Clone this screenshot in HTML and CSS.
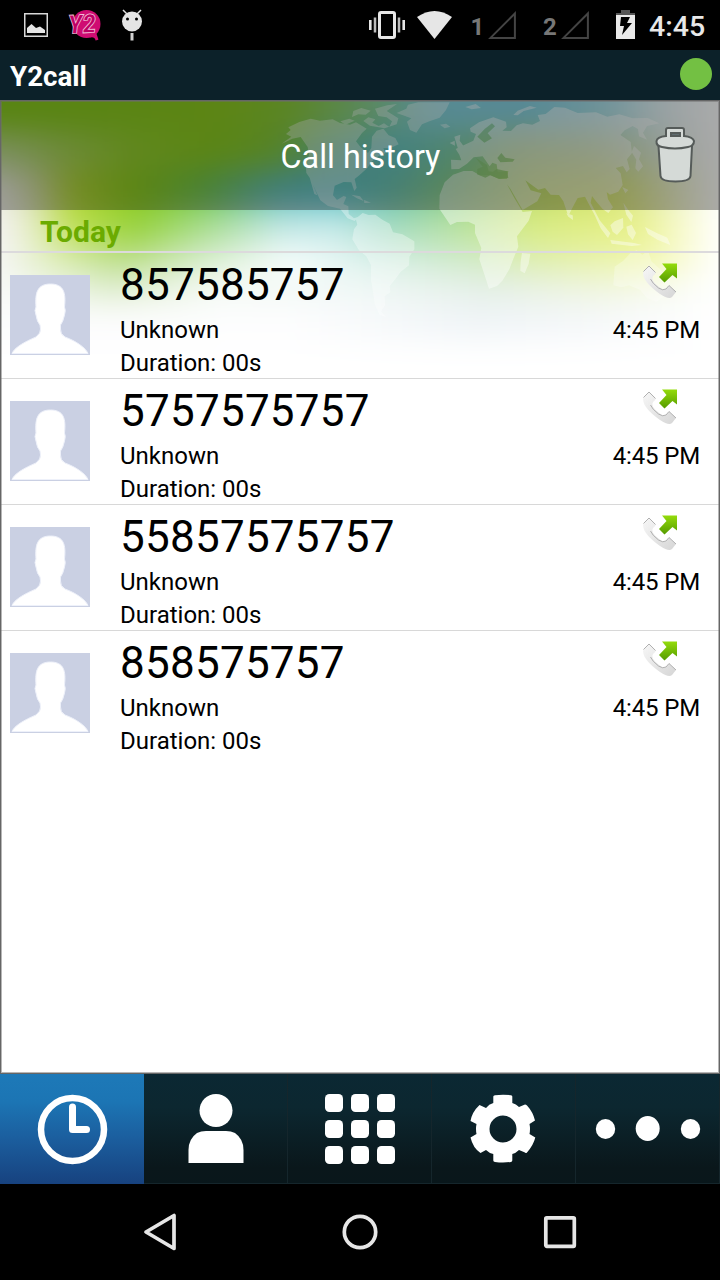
FILE: index.html
```html
<!DOCTYPE html>
<html lang="en">
<head>
<meta charset="utf-8">
<title>Y2call</title>
<link rel="stylesheet" href="styles.css">
</head>
<body>
<svg class="defs" width="0" height="0" aria-hidden="true">
  <defs>
    <linearGradient id="arrow" x1="0" y1="0" x2="0" y2="1"><stop offset="0" stop-color="#94dc0b"/><stop offset="1" stop-color="#559b00"/></linearGradient>
    <linearGradient id="handset" x1="0" y1="0" x2="1" y2="1"><stop offset="0" stop-color="#f7f7f7"/><stop offset="1" stop-color="#d6d6d6"/></linearGradient>
    <symbol id="avatar" viewBox="0 0 80 80">
      <rect width="80" height="80" fill="#cad0e3"/>
      <path d="M2 78.500C4 73 14 67 26 62Q31 58 30.500 54L30 50Q27 47 26 40Q24 35 26 32C25 18 27 9 40.500 9S56 18 54.500 32Q56 35 54.500 40Q53 47 50.500 50V54Q50 59 55 62C66 66 76 73 78 78.500Z" fill="#fff" stroke="#eef1fa"/>
    </symbol>
    <symbol id="outgoing" viewBox="0 0 40 40">
      <path d="M4 9L9 3.500L15.500 10Q16 12 13 14Q10 18 19 25Q23 29 26 27L29 23.500L36 30L32 35Q29 38 20 32Q3 20 3 11Z" fill="url(#handset)"/>
      <path d="M3.500 9.500L9 4L15.500 10.500M10.500 17Q12 21 18.500 26Q23 29 26 27L29 23.500L36 30" fill="none" stroke="#b0b0b0"/>
      <path d="M22 1.500H37V16.500L32.500 13L24.500 20.500L19 15L26.500 7Z" fill="url(#arrow)"/>
    </symbol>
  </defs>
</svg>

<div class="screen">
  <header class="status-bar">
    <div class="notifications">
      <svg width="24" height="24" viewBox="0 0 24 24"><rect x=".75" y=".75" width="22.5" height="22.5" fill="none" stroke="#d8d8d8" stroke-width="1.5"/><path d="M3 20V15L7.500 11L12 15L16 13.500L21 17V20Z" fill="#e6e6e6"/></svg>
      <svg class="app-badge" width="36" height="34" viewBox="0 0 36 34"><circle cx="19.500" cy="16" r="14" fill="#cf0c72"/><path d="M23 28Q29 27 30 32L28 26" fill="#cf0c72" stroke="#cf0c72" stroke-width="3"/><text class="badge-text" x="1" y="25" textLength="28" lengthAdjust="spacingAndGlyphs" transform="rotate(-3 16 16)">Y2</text></svg>
      <svg class="robot" width="22" height="32" viewBox="0 0 22 32"><path d="M2 1L6 5M20 1L16 5" stroke="#e4e4e4" stroke-width="1.500"/><circle cx="11" cy="12.500" r="10" fill="#e4e4e4"/><circle cx="6.500" cy="10" r="1.500"/><circle cx="15.500" cy="10" r="1.500"/><path d="M11 24V31.500" stroke="#d2d2d2" stroke-width="3"/></svg>
    </div>
    <div class="system">
      <svg class="vibrate" width="36" height="28" viewBox="0 0 36 28"><rect x="10.500" y="1.500" width="15" height="25" rx="1.500" fill="none" stroke="#e6e6e6" stroke-width="3"/><path d="M1.300 9V19M34.700 9V19" stroke="#e6e6e6" stroke-width="2.600"/><path d="M6 6.500V21.500M30 6.500V21.500" stroke="#bbb" stroke-width="2.500"/></svg>
      <svg class="wifi" width="35" height="28" viewBox="0 0 36 28" preserveAspectRatio="none"><path d="M0 6Q18-6 36 6L18 28Z" fill="#e6e6e6"/></svg>
      <span class="sim">1</span>
      <svg class="signal" width="28" height="28" viewBox="0 0 28 28"><path d="M2.500 26.900H26.900V2.500Z" fill="none" stroke="#444" stroke-width="2"/></svg>
      <span class="sim sim-two">2</span>
      <svg class="signal" width="28" height="28" viewBox="0 0 28 28"><path d="M2.500 26.900H26.900V2.500Z" fill="none" stroke="#444" stroke-width="2"/></svg>
      <svg class="battery" width="19" height="29" viewBox="0 0 19 29"><path d="M5 0H14V3H19V6H0V3H5Z" fill="#555"/><path d="M0 5H19V29H0Z" fill="#e9e9e9"/><path d="M5 7H14L11 13H16L6 25L8 16H4Z" fill="#000"/></svg>
      <span class="clock">4:45</span>
    </div>
  </header>

  <div class="app-bar"><span>Y2call</span><i class="online"></i></div>

  <main class="content">
    <svg class="backdrop" width="720" height="974" viewBox="0 100 720 974" aria-hidden="true">
      <defs>
        <filter id="soft" filterUnits="userSpaceOnUse" x="-60" y="20" width="840" height="420" color-interpolation-filters="sRGB"><feGaussianBlur stdDeviation="15"/></filter>
        <filter id="edge" x="-5%" y="-5%" width="110%" height="110%"><feGaussianBlur stdDeviation="1.2"/></filter>
        <linearGradient id="r1" gradientUnits="userSpaceOnUse" x1="0" x2="720" y1="0" y2="0"><stop offset="0" stop-color="#84c61c"/><stop offset=".3" stop-color="#89c71f"/><stop offset=".4" stop-color="#88c636"/><stop offset=".5" stop-color="#88cb83"/><stop offset=".6" stop-color="#82cedb"/><stop offset=".74" stop-color="#82cddf"/><stop offset=".84" stop-color="#a6dbe6"/><stop offset=".92" stop-color="#e3f1f4"/><stop offset="1" stop-color="#fff"/></linearGradient>
        <linearGradient id="r2" gradientUnits="userSpaceOnUse" x1="0" x2="720" y1="0" y2="0"><stop offset="0" stop-color="#b8d68c"/><stop offset=".08" stop-color="#a5cf5b"/><stop offset=".18" stop-color="#92cb30"/><stop offset=".29" stop-color="#88c71f"/><stop offset=".38" stop-color="#80c438"/><stop offset=".45" stop-color="#6cc093"/><stop offset=".54" stop-color="#60bfc4"/><stop offset=".64" stop-color="#7bc69b"/><stop offset=".72" stop-color="#a8cd84"/><stop offset=".83" stop-color="#bbd496"/><stop offset=".92" stop-color="#ddeadc"/><stop offset="1" stop-color="#fff"/></linearGradient>
        <linearGradient id="r3" gradientUnits="userSpaceOnUse" x1="0" x2="720" y1="0" y2="0"><stop offset="0" stop-color="#ebebe4"/><stop offset=".05" stop-color="#d0d9a4"/><stop offset=".1" stop-color="#afd233"/><stop offset=".19" stop-color="#88c71b"/><stop offset=".28" stop-color="#6dc24b"/><stop offset=".38" stop-color="#5fbbb5"/><stop offset=".46" stop-color="#5bbec5"/><stop offset=".54" stop-color="#67bdad"/><stop offset=".64" stop-color="#8bcb80"/><stop offset=".74" stop-color="#c0db6b"/><stop offset=".84" stop-color="#d3e36b"/><stop offset=".92" stop-color="#e6edb8"/><stop offset="1" stop-color="#fff"/></linearGradient>
        <linearGradient id="r4" gradientUnits="userSpaceOnUse" x1="0" x2="720" y1="0" y2="0"><stop offset="0" stop-color="#f4f2f3"/><stop offset=".05" stop-color="#e3edbe"/><stop offset=".1" stop-color="#bfe051"/><stop offset=".19" stop-color="#97d23d"/><stop offset=".27" stop-color="#a6dc83"/><stop offset=".39" stop-color="#c4e8e6"/><stop offset=".47" stop-color="#c6eae9"/><stop offset=".54" stop-color="#a3dbc2"/><stop offset=".64" stop-color="#bbe3a0"/><stop offset=".74" stop-color="#d9ec84"/><stop offset=".88" stop-color="#e7f087"/><stop offset=".95" stop-color="#f8fad0"/><stop offset="1" stop-color="#fff"/></linearGradient>
        <linearGradient id="r5" gradientUnits="userSpaceOnUse" x1="0" x2="720" y1="0" y2="0"><stop offset="0" stop-color="#f5f5f5"/><stop offset=".08" stop-color="#deedba"/><stop offset=".17" stop-color="#bade87"/><stop offset=".28" stop-color="#d8edcf"/><stop offset=".4" stop-color="#fafefe"/><stop offset=".52" stop-color="#d8f0ea"/><stop offset=".64" stop-color="#cfeacb"/><stop offset=".76" stop-color="#e0efae"/><stop offset=".9" stop-color="#f2f7ae"/><stop offset="1" stop-color="#fff"/></linearGradient>
        <linearGradient id="r6" gradientUnits="userSpaceOnUse" x1="0" x2="720" y1="0" y2="0"><stop offset="0" stop-color="#f8faf8"/><stop offset=".16" stop-color="#deedcf"/><stop offset=".3" stop-color="#f5faf5"/><stop offset=".5" stop-color="#f0f8f6"/><stop offset=".68" stop-color="#e4efe7"/><stop offset=".84" stop-color="#f0f6e0"/><stop offset="1" stop-color="#fff"/></linearGradient>
        <linearGradient id="r7" gradientUnits="userSpaceOnUse" x1="0" x2="720" y1="0" y2="0"><stop offset="0" stop-color="#fbfcfc"/><stop offset=".4" stop-color="#fdfdfe"/><stop offset=".66" stop-color="#eff4f7"/><stop offset=".8" stop-color="#f4f7f9"/><stop offset="1" stop-color="#fff"/></linearGradient>
      </defs>
      <rect y="100" width="720" height="974" fill="#fff"/>
      <g filter="url(#soft)">
        <rect x="-60" y="40" width="840" height="92" fill="url(#r1)"/>
        <rect x="-60" y="132" width="840" height="38" fill="url(#r2)"/>
        <rect x="-60" y="170" width="840" height="39" fill="url(#r3)"/>
        <rect x="-60" y="209" width="840" height="36" fill="url(#r4)"/>
        <rect x="-60" y="245" width="840" height="29" fill="url(#r5)"/>
        <rect x="-60" y="274" width="840" height="29" fill="url(#r6)"/>
        <rect x="-60" y="303" width="840" height="37" fill="url(#r7)"/>
        <rect x="-60" y="340" width="840" height="150" fill="#fff"/>
      </g>
      <g class="map americas" transform="translate(270 98) scale(.33333)" filter="url(#edge)">
        <path d="M35 137L64 116L48 108L62 96L55 88L88 72L122 62L150 68L188 64L210 75L240 80L258 73L290 92L276 105L258 130L272 148L294 165L304 150L306 116L320 98L340 92L356 112L376 120L386 139L360 151L340 150L346 166L326 174L306 190L292 210L268 232L254 243L260 269L253 279L244 253L221 252L194 263L189 292L201 306L221 294L229 297L220 318L235 325L236 348L252 361L266 356L254 369L233 361L210 332L174 324L151 307L128 259L142 292L133 288L119 239L109 225L107 195L117 172L113 147L92 117L67 122Z"/>
        <path d="M250 39L274 30L302 38L287 50L265 49L246 57ZM211 70L238 62L254 68L226 80ZM295 58L316 64L307 74L326 84L342 76L358 87L366 70L350 58L325 54L315 32L352 22L381 18L350 39L385 61L380 79L344 91L300 83L280 69Z"/>
        <path d="M380 45L409 32L414 20L445 13H539L528 36L509 59L478 70L456 79L439 104L420 96L411 71L424 61ZM510 80L528 77L541 86L524 91ZM244 290L270 295L281 309L261 301ZM282 306L303 314L283 315Z"/>
        <path d="M257 362L278 345L296 351L316 350L337 365L359 377L369 403L397 409L433 430L433 454L418 476L417 502L392 521L376 543L359 564L361 583L344 594L345 622L333 640L348 657L329 650L315 620L309 580L303 545V501L289 475L267 457L247 424L252 394L262 380Z"/>
      </g>
      <g class="map" transform="translate(430 98) scale(.33333)" filter="url(#edge)">
        <path d="M63 185L94 187L88 170L77 153L96 144L130 128L138 108L122 101L120 91L147 73L190 58L228 71L230 88L217 98L243 99L260 82L279 76L307 80L330 69L323 51L347 48L373 27L405 29L443 45L498 43L532 56L568 49L608 61L653 60L688 76L651 84L639 104L651 125L627 115L624 93L608 84L584 97L571 111L602 132L606 165L591 184L599 213L590 223L579 204L557 210L572 226L578 261L565 281L540 290L530 282L534 304L549 328L535 345L518 333L498 310L486 294L482 314L509 367L541 406L534 420L512 391L495 353L465 296L443 300L430 324L415 354L400 310L387 291L362 290L345 270L325 275L286 247L302 277L334 286L322 310L278 336L241 272L231 259L253 300L278 342L306 339L296 368L261 415L265 446L250 482L238 514L217 548L201 564L177 572L164 532L148 484L154 450L135 405V380L115 371L81 372L61 381L28 332L29 291L44 253L69 230L101 219H127L150 232L180 231L207 243L231 242L235 219L203 221L200 199L187 194L179 205L158 175L131 178L111 197L87 213L64 214Z"/>
        <path d="M73 116L91 110L89 128L100 143L84 152ZM59 135L74 128L75 143ZM276 465L301 467L296 497L284 526L271 518L272 491ZM409 346L428 352L429 366L415 356ZM612 144L633 164L627 184L639 205L625 221L616 211L619 185L605 162ZM250 51L263 38L300 24L320 29L281 39L263 52ZM106 27L137 18L153 30L125 34ZM577 267L595 276L586 286ZM580 314L595 336L609 353L604 372L589 350ZM541 382L554 370L579 360L580 389L561 411L548 401ZM589 386L605 380L618 405L608 426L594 409ZM645 387L680 405L712 419L721 441L684 426L654 408ZM541 426L612 435L636 441L605 444L545 437Z"/>
        <path d="M550 562L554 506L580 488L602 464L620 457L637 470L655 458L664 490L695 518L720 549L710 588L680 611L650 599L630 575L597 562L574 568Z" opacity=".65"/>
        <path d="M142 116L164 93L186 76L195 85L173 106L186 121L163 134ZM202 180L214 165L226 179L254 184L248 191L211 193ZM137 179L171 201L176 220L189 221L200 213L231 220L235 240L207 242L181 232L166 239L141 229L142 213L158 206Z" fill="#75b85c" opacity=".8"/>
      </g>
    </svg>

    <div class="page-title">
      <h1>Call history</h1>
      <svg class="trash" width="42" height="58" viewBox="0 0 42 58"><g fill="#d5dad7" stroke="#555b59" stroke-width="2"><path d="M4.500 20H38L36.500 50Q36 55.500 21.500 55.500T6.500 50Z"/><path d="M2.500 15Q3 11 12 10V4Q12 2 14 2H28Q30 2 30 4V10Q39 11 40 15Q40 20 34 21Q21 24 8 21Q2 20 2.500 15Z"/><path d="M17 7H26V10H17Z" fill="#606d70"/></g></svg>
    </div>
    <h2 class="day">Today</h2>
    <ul class="calls">
      <li class="call"><svg class="avatar"><use href="#avatar"/></svg><div class="details"><b>857585757</b><span>Unknown</span><span>Duration: 00s</span></div><div class="meta"><svg class="direction"><use href="#outgoing"/></svg><time>4:45 PM</time></div></li>
      <li class="call"><svg class="avatar"><use href="#avatar"/></svg><div class="details"><b>5757575757</b><span>Unknown</span><span>Duration: 00s</span></div><div class="meta"><svg class="direction"><use href="#outgoing"/></svg><time>4:45 PM</time></div></li>
      <li class="call"><svg class="avatar"><use href="#avatar"/></svg><div class="details"><b>55857575757</b><span>Unknown</span><span>Duration: 00s</span></div><div class="meta"><svg class="direction"><use href="#outgoing"/></svg><time>4:45 PM</time></div></li>
      <li class="call"><svg class="avatar"><use href="#avatar"/></svg><div class="details"><b>858575757</b><span>Unknown</span><span>Duration: 00s</span></div><div class="meta"><svg class="direction"><use href="#outgoing"/></svg><time>4:45 PM</time></div></li>
    </ul>
    <div class="frame"></div>
  </main>

  <nav class="tabs">
    <a class="tab active"><svg viewBox="0 0 144 110"><circle cx="72.500" cy="55.500" r="31.500" fill="none" stroke="#fff" stroke-width="6.500"/><path d="M72.500 33V55.500H86.500" fill="none" stroke="#fff" stroke-width="7" stroke-linecap="round" stroke-linejoin="round"/></svg></a>
    <a class="tab"><svg viewBox="0 0 144 110" fill="#fff"><circle cx="72" cy="36.500" r="16.500"/><path d="M44.500 89V76Q44.500 65 53 59Q57 57 62 57H82Q87 57 91 59Q99.500 65 99.500 76V89Z"/></svg></a>
    <a class="tab"><svg viewBox="0 0 144 110" fill="#fff"><rect x="37" y="20" width="18" height="18" rx="4.500"/><rect x="63" y="20" width="18" height="18" rx="4.500"/><rect x="89" y="20" width="18" height="18" rx="4.500"/><rect x="37" y="46" width="18" height="18" rx="4.500"/><rect x="63" y="46" width="18" height="18" rx="4.500"/><rect x="89" y="46" width="18" height="18" rx="4.500"/><rect x="37" y="72" width="18" height="18" rx="4.500"/><rect x="63" y="72" width="18" height="18" rx="4.500"/><rect x="89" y="72" width="18" height="18" rx="4.500"/></svg></a>
    <a class="tab"><svg viewBox="0 0 144 110"><path fill="#fff" fill-rule="evenodd" d="M61.300 22.500Q61.300 21.500 63 21.200Q71 20.300 79 21.200Q80.300 21.500 80.300 22.500V29Q84 30 87 33L93 30.500Q94 30.500 95 31.500Q101 38 103 46.500L97.500 50Q98.500 55 97.500 60L103.300 63.500Q101.500 71 95 78.500Q94 79.500 93 78.500L87 76Q84 79 80.300 80V86.500Q80 87.500 79 88Q71 89 63 88Q61.300 87.500 61.300 86.500V80Q57 79 54 76L48.500 79Q41 74 38.500 63.500L44.500 60Q43.500 55 44.500 50L38.500 47Q40 38 47.500 31L54 34Q57 30 61.300 29ZM71 41.500A13.500 13.500 0 1 0 71 68.500A13.500 13.500 0 1 0 71 41.500Z"/></svg></a>
    <a class="tab"><svg viewBox="0 0 144 110" fill="#fff"><ellipse cx="29.500" cy="55" rx="9.700" ry="10"/><ellipse cx="71.700" cy="54.500" rx="12" ry="12.500"/><ellipse cx="114.500" cy="55" rx="9.700" ry="10"/></svg></a>
  </nav>

  <footer class="system-nav">
    <svg width="36" height="40" viewBox="0 0 36 40"><path d="M4 20L32 3.500V36.500Z"/></svg>
    <svg width="36" height="40" viewBox="0 0 36 40"><circle cx="18" cy="20" r="15.700"/></svg>
    <svg width="36" height="40" viewBox="0 0 36 40"><rect x="3.800" y="5.800" width="28.500" height="28.500" rx="1"/></svg>
  </footer>
</div>
</body>
</html>
```

FILE: styles.css
```css
* { box-sizing: border-box; }
body { margin: 0; background: #000; font-family: Roboto, sans-serif; }
.defs { position: absolute; }
svg { display: block; flex: none; }
.screen { width: 720px; height: 1280px; display: flex; flex-direction: column; overflow: hidden; }

.status-bar { height: 50px; padding: 0 15px 0 24px; display: flex; justify-content: space-between; align-items: center; color: #e8e8e8; }
.notifications, .system { display: flex; align-items: center; }
.app-badge { margin-left: 19px; }
.badge-text { font: italic 900 26px Roboto, sans-serif; fill: #bd0064; stroke: #f4c4dc; stroke-width: .8px; }
.robot { margin-left: 18px; margin-bottom: 1px; }
.wifi { margin-left: 12px; }
.sim { width: 11px; margin: 4px 5px 0 20px; font-size: 24px; font-weight: 700; line-height: 28px; color: #777; display: flex; justify-content: center; }
.sim-two { width: 14px; margin-left: 27px; margin-right: 4px; }
.battery { margin-left: 27px; margin-bottom: 1px; }
.clock { margin-left: 14px; margin-top: 3px; width: 56px; font-size: 28.5px; font-weight: 500; line-height: 34px; }

.app-bar { height: 50px; padding: 0 8px 3px 10px; display: flex; align-items: center; justify-content: space-between; background: #0c2129; color: #fff; font-size: 27.7px; font-weight: 700; }
.app-bar span { padding-top: 6px; }
.online { width: 32px; height: 32px; border-radius: 50%; background: #73c043; }

.content { position: relative; height: 974px; isolation: isolate; }
.backdrop { position: absolute; inset: 0; z-index: -1; }
.map { fill: #fff; opacity: .42; }
.americas { opacity: .34; }
.frame { position: absolute; inset: 0; border: 1px solid #666; box-shadow: inset 0 0 0 1px rgba(110, 110, 110, .5); pointer-events: none; }
.page-title { height: 110px; padding: 0 24px 0 66px; display: flex; align-items: center; background: rgba(0, 0, 0, .33); }
.page-title h1 { flex: 1; margin: 0; padding: 3px 0 0 1px; text-align: center; color: #fff; font-size: 32.3px; font-weight: 400; }
.day { height: 43px; margin: 0; padding: 4px 40px 0; border-bottom: 2px solid #dcdadc; color: #6bab00; font-size: 30px; line-height: 35px; }
.calls { margin: 0; padding: 0; list-style: none; }
.call { height: 126px; display: flex; border-bottom: 1px solid #d8d8d8; }
.call:last-child { border-bottom: 0; }
.avatar { width: 80px; height: 80px; margin: 22px 30px 0 10px; }
.details { flex: 1; display: flex; flex-direction: column; color: #000; font-size: 24px; line-height: 33px; }
.details b { height: 61px; font-size: 44px; font-weight: 400; line-height: 60px; padding-top: 2px; letter-spacing: .25px; }
.meta { padding: 9px 20px 0 0; display: flex; flex-direction: column; align-items: flex-end; font-size: 24px; line-height: 33px; letter-spacing: -.15px; }
.direction { width: 40px; height: 40px; margin: 0 20px 12px 0; }

.tabs { height: 110px; display: grid; grid-template: 110px / repeat(5, 144px); background: linear-gradient(#0b2833, #0c2730 30%, #0a171b 85%, #09171b); }
.tab { border: solid #15262c; border-width: 0 1px 1px 0; }
.tab svg { width: 144px; height: 110px; }
.tab.active { border: 0; background: linear-gradient(#1d79b8, #1c75b4 25%, #1b5d9d 60%, #17427f); }
.system-nav { height: 96px; padding: 0 142px; display: flex; align-items: center; justify-content: space-between; }
.system-nav svg { fill: none; stroke: #e6e6e6; stroke-width: 3.700; stroke-linejoin: round; }
```
